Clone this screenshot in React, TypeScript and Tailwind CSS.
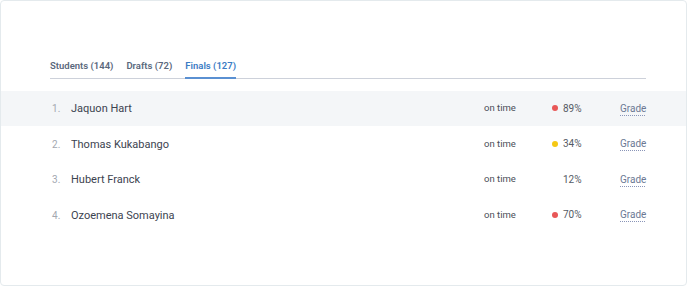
import React from 'react';

type Row = {
  n: number;
  name: string;
  status: string;
  pct: number;
  dot?: 'red' | 'yellow';
};

const rows: Row[] = [
  { n: 1, name: 'Jaquon Hart', status: 'on time', pct: 89, dot: 'red' },
  { n: 2, name: 'Thomas Kukabango', status: 'on time', pct: 34, dot: 'yellow' },
  { n: 3, name: 'Hubert Franck', status: 'on time', pct: 12 },
  { n: 4, name: 'Ozoemena Somayina', status: 'on time', pct: 70, dot: 'red' },
];

const tabs = [
  { label: 'Students (144)', active: false },
  { label: 'Drafts (72)', active: false },
  { label: 'Finals (127)', active: true },
];

export default function App() {
  return (
    <div className="w-[688px] h-[287px] bg-white font-['Roboto',_'Liberation_Sans',_sans-serif]">
      <div className="h-[286px] w-[687px] border border-[#e4eaed] rounded-[4px] pt-[58px]">
        <div className="mx-[49px] w-[596px] flex gap-[13px] border-b-[1.5px] border-[#cdd1da]">
          {tabs.map((t) => (
            <div
              key={t.label}
              className={`pb-[4px] -mb-[1.5px] text-[9.5px] font-semibold leading-[14px] ${
                t.active
                  ? 'text-[#3b7cc4] border-b-2 border-[#5a90d2]'
                  : 'text-[#5a687c] border-b-2 border-transparent'
              }`}
            >
              {t.label}
            </div>
          ))}
        </div>

        <div className="mt-[12px]">
          {rows.map((r, i) => (
            <div
              key={r.n}
              className={`h-[35.5px] flex items-center pl-[51px] ${i === 0 ? 'bg-[#f4f6f8]' : ''}`}
            >
              <div className="w-[19px] pt-[1px] text-[10px] text-[#a3a8b0]">{r.n}.</div>
              <div className="flex-1 pt-[2px] text-[11px] text-[#3c4350]">{r.name}</div>
              <div className="w-[68px] text-[9.5px] text-[#4a4f58]">{r.status}</div>
              <div className="w-[68px] flex items-center text-[10px] text-[#555b64]">
                <span
                  className={`w-[6px] h-[6px] rounded-full mr-[5px] ${
                    r.dot === 'red' ? 'bg-[#e85757]' : r.dot === 'yellow' ? 'bg-[#f5c814]' : 'bg-transparent'
                  }`}
                />
                {r.pct}%
              </div>
              <div className="w-[66px] text-[10px] text-[#6b7894] underline decoration-dotted decoration-[#8a95b8] underline-offset-[3px]">
                Grade
              </div>
            </div>
          ))}
        </div>
      </div>
    </div>
  );
}
